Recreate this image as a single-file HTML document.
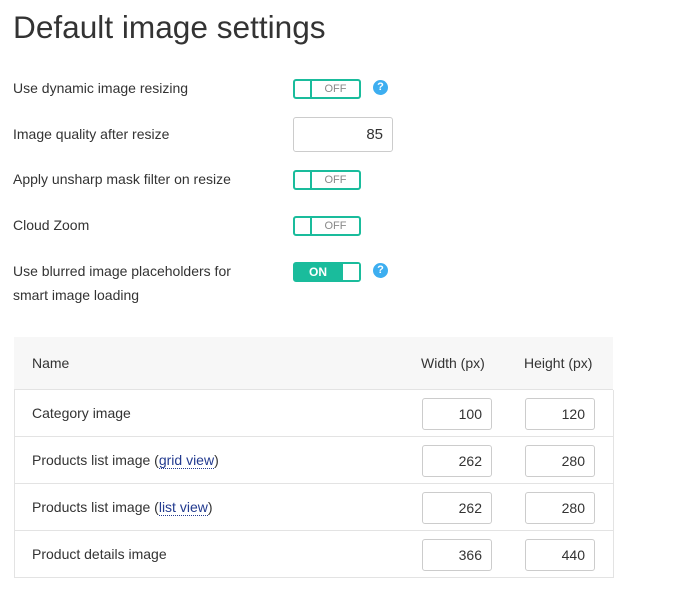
<!DOCTYPE html>
<html><head><style>
body{margin:0;background:#fff;font-family:"Liberation Sans",sans-serif;color:#333;width:682px;height:600px;overflow:hidden;position:relative}
.a{position:absolute}
h1{position:absolute;left:13px;top:9px;margin:0;font-weight:normal;font-size:31.6px;color:#333}
.lbl{position:absolute;left:13px;font-size:14px;line-height:24px;color:#333}
.tg{position:absolute;left:293px;width:64px;height:16px;border:2px solid #1abc9c;border-radius:3px;background:#fff}
.tg .k{position:absolute;left:0;top:0;width:15px;height:16px;border-right:2px solid #1abc9c}
.tg span{position:absolute;left:17px;right:0;top:0;line-height:16px;text-align:center;font-size:11px;color:#888}
.on{background:#1abc9c}
.on .k{left:auto;right:0;border-right:none;background:#fff;width:16px}
.on span{left:0;right:18px;color:#fff;font-weight:bold;font-size:12px}
.q{position:absolute;left:373px;width:15px;height:15px;border-radius:50%;background:#3daef0;color:#fff;font-size:11px;font-weight:bold;text-align:center;line-height:15px}
.inp{position:absolute;background:#fff;border:1px solid #ccc;border-radius:3px;text-align:right;box-sizing:border-box;font-size:14px;color:#333}
.row{position:absolute;left:14px;width:598px;border-bottom:1px solid #e3e3e3;border-left:1px solid #e3e3e3;border-right:1px solid #e3e3e3;height:46px}
.row .n{position:absolute;left:17px;top:15px;font-size:14px}
a{color:#223a8f;text-decoration:none;border-bottom:1px dotted #223a8f}
</style></head><body>
<h1>Default image settings</h1>
<div class="lbl" style="top:76px">Use dynamic image resizing</div>
<div class="tg" style="top:79px"><div class="k"></div><span>OFF</span></div>
<div class="q" style="top:80px">?</div>
<div class="lbl" style="top:122px">Image quality after resize</div>
<div class="inp" style="left:293px;top:117px;width:100px;height:35px;padding:8px 9px;font-size:15px">85</div>
<div class="lbl" style="top:167px">Apply unsharp mask filter on resize</div>
<div class="tg" style="top:170px"><div class="k"></div><span>OFF</span></div>
<div class="lbl" style="top:213px">Cloud Zoom</div>
<div class="tg" style="top:216px"><div class="k"></div><span>OFF</span></div>
<div class="lbl" style="top:259px">Use blurred image placeholders for<br>smart image loading</div>
<div class="tg on" style="top:262px"><div class="k"></div><span>ON</span></div>
<div class="q" style="top:263px">?</div>
<div class="a" style="left:14px;top:337px;width:599px;height:52px;background:#f7f7f7;border-bottom:1px solid #e3e3e3;font-size:14px">
<div class="a" style="left:18px;top:18px">Name</div>
<div class="a" style="left:407px;top:18px">Width (px)</div>
<div class="a" style="left:510px;top:18px">Height (px)</div>
</div>
<div class="row" style="top:390px"><div class="n">Category image</div><div class="inp" style="left:407px;top:8px;width:70px;height:32px;padding:7px 9px">100</div><div class="inp" style="left:510px;top:8px;width:70px;height:32px;padding:7px 9px">120</div></div>
<div class="row" style="top:437px"><div class="n">Products list image (<a>grid view</a>)</div><div class="inp" style="left:407px;top:8px;width:70px;height:32px;padding:7px 9px">262</div><div class="inp" style="left:510px;top:8px;width:70px;height:32px;padding:7px 9px">280</div></div>
<div class="row" style="top:484px"><div class="n">Products list image (<a>list view</a>)</div><div class="inp" style="left:407px;top:8px;width:70px;height:32px;padding:7px 9px">262</div><div class="inp" style="left:510px;top:8px;width:70px;height:32px;padding:7px 9px">280</div></div>
<div class="row" style="top:531px"><div class="n">Product details image</div><div class="inp" style="left:407px;top:8px;width:70px;height:32px;padding:7px 9px">366</div><div class="inp" style="left:510px;top:8px;width:70px;height:32px;padding:7px 9px">440</div></div>
</body></html>
